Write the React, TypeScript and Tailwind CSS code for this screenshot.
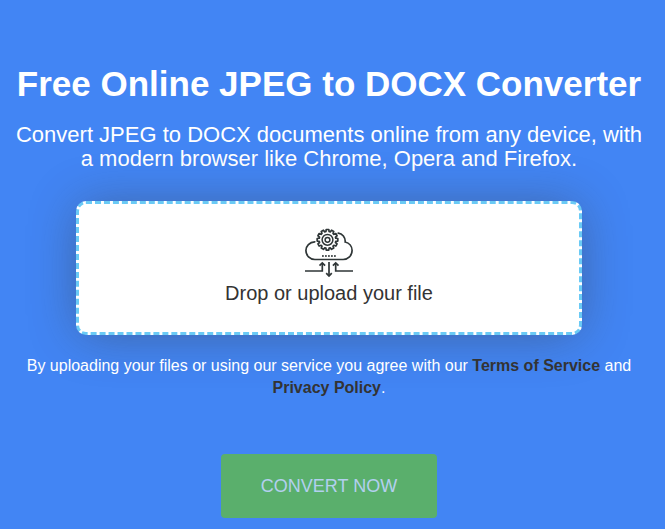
const gearPoints = Array.from({ length: 12 }, (_, i) => {
  const at = (r: number, deg: number) => {
    const a = ((i * 30 + deg - 90) * Math.PI) / 180;
    return `${(22.5 + r * Math.cos(a)).toFixed(2)},${(11.8 + r * Math.sin(a)).toFixed(2)}`;
  };
  return [at(8.4, -11), at(10.4, -7), at(10.4, 7), at(8.4, 11)].join(" ");
}).join(" ");

function CloudUploadIcon() {
  return (
    <svg width="48" height="49" viewBox="0 0 48 49" fill="none" stroke="#2f3637" strokeWidth="1.7" className="block shrink-0">
      <path
        d="M9.800 13.800C4.500 14 .9 18 .9 22.600c0 5 4 8.900 9 8.900h28.200c5 0 9-3.900 9-8.900 0-4.300-2.900-7.700-6.900-8.600.3-4.500-2.800-8.500-7-8.800"
        strokeLinecap="round"
      />
      <polygon points={gearPoints} strokeLinejoin="round" />
      <circle cx="22.5" cy="11.8" r="5.4" strokeWidth="1.500" />
      <circle cx="22.5" cy="11.8" r="2.4" strokeWidth="1.500" />
      <path d="M17 28h14" strokeWidth="1.8" strokeDasharray="1.8 1.200" stroke="#555b5c" />
      <path d="M0 43h17.300v-8M48 43H30.700v-8M24 34v13.500" />
      <path d="m14.500 37.700 2.800-2.800 2.800 2.800M27.900 37.700l2.800-2.800 2.800 2.800M21.200 45.200l2.800 2.800 2.800-2.800" />
    </svg>
  );
}

export default function App() {
  return (
    <main className="h-[529px] w-[665px] overflow-hidden bg-[#4285f4] font-['Liberation_Sans',Arial,sans-serif] text-white">
      <div className="flex w-[658px] flex-col items-center text-center">
        <h1 className="mt-16 text-[35px] leading-10 font-bold whitespace-nowrap">Free Online JPEG to DOCX Converter</h1>
        <p className="mt-[19px] text-[22px] leading-6 whitespace-nowrap">
          Convert JPEG to DOCX documents online from any device, with
          <br />a modern browser like Chrome, Opera and Firefox.
        </p>
        <div className="mt-[30px] flex h-[134px] w-[506px] flex-col items-center rounded-[10px] border-[3px] border-dashed border-[#6acaf5] bg-white pt-6 text-[#333] shadow-[0_2px_50px_-4px_rgba(60,60,60,0.48)]">
          <CloudUploadIcon />
          <span className="mt-1 text-[20px] leading-6">Drop or upload your file</span>
        </div>
        <p className="mt-5 text-[16px] leading-[22px] whitespace-nowrap">
          By uploading your files or using our service you agree with our <a className="font-bold text-[#333]">Terms of Service</a> and
          <br />
          <a className="font-bold text-[#333]">Privacy Policy</a>.
        </p>
        <button className="mt-[55px] h-16 w-[216px] rounded bg-[#5aaf6c] text-[18px] text-[#b3d0ef]">CONVERT NOW</button>
      </div>
    </main>
  );
}
